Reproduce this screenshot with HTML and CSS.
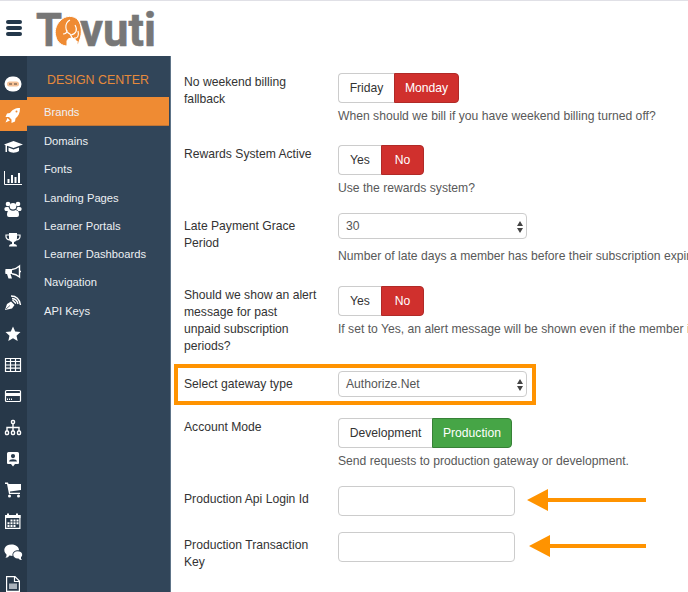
FILE: index.html
```html
<!DOCTYPE html>
<html lang="en">
<head>
<meta charset="utf-8">
<title>Tovuti</title>
<link rel="stylesheet" href="styles.css">
</head>
<body>
<div class="app">
<header class="header">
  <div class="burger"><i></i><i></i><i></i></div>
  <svg class="logo" width="122" height="44" viewBox="0 0 122 44">
    <g class="logo-text">
      <text x="0" y="37.500" textLength="26" lengthAdjust="spacingAndGlyphs">T</text>
      <text x="44" y="37.500" textLength="76" lengthAdjust="spacingAndGlyphs">vuti</text>
    </g>
    <path stroke="#fff" stroke-width="1" fill="#ef8b33" d="M24 13C29 7 38 7 42 12C46 17 46 26 44 31Q43 35 41 37V34C39 29 32 29 31 33V38C26 38 21 34 20 29C18 23 20 17 24 13Z"/>
    <path fill="none" stroke="#fff" stroke-width="1.100" d="M34 12C28 15 29 24 34 26C36 30 38 34 42 34M35 27C40 26 42 22 39 17M38 30C42 31 43 27 42 23M31 22C31 25 30 26 27 26"/>
  </svg>
</header>
<div class="body">
  <nav class="rail">
    <a><svg viewBox="0 0 18 18"><rect x=".5" y="1.5" width="17" height="15" rx="7.5" fill="#fff"/><rect x="3" y="6.5" width="12" height="5" rx="2.5" fill="#f5c196"/><path d="M5 9h3M10 9h3" stroke="#53453b"/></svg></a>
    <a class="on"><svg viewBox="0 0 18 18"><path fill="#fff" d="M16 2C11 2 8 4 6 7L3 7.500L1.500 11H5L7.500 13.500V17L11 15.500L11.500 12.500C14.500 10 16 7 16 2ZM3.500 12L1.500 16.500L6 14.500Z"/><circle cx="12.500" cy="5.500" r="1" fill="#ef8b33"/></svg></a>
    <a><svg viewBox="0 0 18 18"><path fill="#fff" d="M9.500 3L19 6.500L9.500 10L3 7.700V14H1.500V7.300L0 6.500ZM4.500 9.500L9.500 11.500L15 9.500V13C12 15.200 7 15.200 4.500 13Z"/></svg></a>
    <a><svg viewBox="0 0 18 18"><path fill="none" stroke="#fff" d="M.5 2V15.500H18"/><path stroke="#fff" stroke-width="2" d="M4.500 14V10M8 14V6M11.500 14V8M15 14V4"/></svg></a>
    <a><svg viewBox="0 0 18 18" fill="#fff"><circle cx="4" cy="4" r="2.300"/><circle cx="14" cy="4" r="2.300"/><circle cx="9" cy="6.300" r="3.300"/><path d="M.5 10V8Q1 6.500 4.500 7L6 10L4.500 11H1.500ZM17.500 10V8Q17 6.500 13.500 7L12 10L13.500 11H16.500ZM5.500 9.500Q9 12 12.500 9.500Q15 10.500 15 15Q15 17 13 17H5Q3 17 3 15Q3 10.500 5.500 9.500Z"/></svg></a>
    <a><svg viewBox="0 0 18 18"><path fill="#fff" d="M5 2H13V7Q13 10 10 11V13Q13 13 13 15.500H5Q5 13 8 13V11Q5 10 5 7Z"/><path fill="none" stroke="#fff" stroke-width="1.200" d="M5 4H2V5.500Q2 8.500 6 9M13 4H16V5.500Q16 8.500 12 9"/></svg></a>
    <a><svg viewBox="0 0 18 18"><path fill="#fff" d="M1.500 6H8V11H6.500L8 15.500H4.500L3 11H1.500Q1 8.500 1.500 6Z"/><path fill="none" stroke="#fff" stroke-width="1.400" d="M8 6.500Q12 6 15.500 3V14Q12 11 8 10.700M15 8.500H17"/></svg></a>
    <a><svg viewBox="0 0 18 18"><path fill="#fff" d="M1 16L3 10L7 7.500L10.500 11L8 14.500ZM8 6.500L11.500 10L12.500 9L9 5.500Z"/><path stroke="#293b4d" stroke-width=".7" d="M2 15L6 11.500"/><path fill="none" stroke="#fff" stroke-width="1.400" d="M7 2Q15 2 16.500 11M8 4.500Q13 5 14 10"/></svg></a>
    <a><svg viewBox="0 0 18 18"><path fill="#fff" d="M9 1.500L11.200 6.500L16.500 7L12.500 10.700L13.700 16L9 13.200L4.300 16L5.500 10.700L1.500 7L6.800 6.500Z"/></svg></a>
    <a><svg viewBox="0 0 18 18"><path fill="none" stroke="#fff" stroke-width="1.200" d="M1.500 2.500H16.500V15.500H1.500ZM1.500 5.500H16.500M1.500 9H16.500M1.500 12.200H16.500M6.500 2.500V15.500M11.500 2.500V15.500"/></svg></a>
    <a><svg viewBox="0 0 18 18"><rect x="1.500" y="3.500" width="15" height="11" rx="1" fill="none" stroke="#fff" stroke-width="1.200"/><path fill="#fff" d="M1.500 6H16.500V9H1.500ZM3 11.500h1v1.500h-1zM5 11.500h1v1.500h-1zM7 11.500h1v1.500h-1z"/></svg></a>
    <a><svg viewBox="0 0 18 18"><g fill="none" stroke="#fff" stroke-width="1.400"><rect x="7.500" y="1.500" width="3" height="3" rx="1"/><rect x="1.500" y="12" width="3" height="3.500" rx="1"/><rect x="7.500" y="12" width="3" height="3.500" rx="1"/><rect x="13.500" y="12" width="3" height="3.500" rx="1"/><path d="M9 4.500V12M3 12V8.500H15V12"/></g></svg></a>
    <a><svg viewBox="0 0 18 18"><path fill="#fff" d="M4.500 2H13.500Q15 2 15 3.500V13Q15 14 14 14H11L9 16.500L7 14H4Q3 14 3 13V3.500Q3 2 4.500 2Z"/><path fill="#293b4d" d="M9 4a2 2 0 0 1 0 4.200a2 2 0 0 1 0-4.200ZM5 11.500Q5.500 9.200 9 9.200T13 11.500Z"/></svg></a>
    <a><svg viewBox="0 0 18 18"><path fill="#fff" d="M1 1.500H4L4.500 3H17V9L6 10.500V11.700H16V13H5L3 3H1Z"/><circle cx="5.500" cy="15" r="1.500" fill="#fff"/><circle cx="14.500" cy="15" r="1.500" fill="#fff"/></svg></a>
    <a><svg viewBox="0 0 18 18"><path fill="none" stroke="#fff" stroke-width="1.200" d="M1.600 3.500H15.900V16.400H1.600Z"/><path fill="#fff" d="M1 3H3V1.500H5V3H12V1.500H14V3H16.500V6H1ZM6.500 7.500h2v2h-2zM9.500 7.500h2v2h-2zM12.500 7.500h2v2h-2zM3.500 10.300h2v2h-2zM6.500 10.300h2v2h-2zM9.500 10.300h2v2h-2zM12.500 10.300h2v2h-2zM3.500 13h2v2h-2zM6.500 13h2v2h-2zM9.500 13h2v2h-2z"/></svg></a>
    <a><svg viewBox="0 0 18 18"><path fill="#fff" d="M7.500 1.500C12 1.500 15 4 15 7.200C11 7 8 9 8.500 13L5.500 12.500Q4 15 1.500 14.800Q3 13 2.500 11.500C-1.500 8 0 1.500 7.500 1.500Z"/><path fill="#fff" d="M13.500 8.300C19 8.300 19 13 17 14Q16.500 16 18 17Q15.500 17 14.500 15.500C8 16 7.500 8.300 13.500 8.300Z"/></svg></a>
    <a><svg viewBox="0 0 18 18"><path fill="none" stroke="#fff" stroke-width="1.200" d="M2.600 1.600H11L15.400 6V16.400H2.600ZM10.500 1.600V6.500H15.400"/><path fill="#aab3bc" d="M5 8.500H13V14H5Z"/></svg></a>
  </nav>
  <nav class="menu">
    <h2>DESIGN CENTER</h2>
    <a class="on">Brands</a>
    <a>Domains</a>
    <a>Fonts</a>
    <a>Landing Pages</a>
    <a>Learner Portals</a>
    <a>Learner Dashboards</a>
    <a>Navigation</a>
    <a>API Keys</a>
  </nav>
  <main class="form">
    <div class="row">
      <label>No weekend billing<br>fallback</label>
      <div><div class="group"><b class="w56">Friday</b><b class="red w65">Monday</b></div><p>When should we bill if you have weekend billing turned off?</p></div>
    </div>
    <div class="row">
      <label>Rewards System Active</label>
      <div><div class="group"><b class="w43">Yes</b><b class="red w43">No</b></div><p>Use the rewards system?</p></div>
    </div>
    <div class="row low">
      <label>Late Payment Grace<br>Period</label>
      <div><div class="select">30<svg width="6" height="12" viewBox="0 0 6 12"><path fill="#444" d="M0 5L3 0L6 5ZM0 7L3 12L6 7Z"/></svg></div><p class="far">Number of late days a member has before their subscription expires.</p></div>
    </div>
    <div class="row">
      <label>Should we show an alert<br>message for past<br>unpaid subscription<br>periods?</label>
      <div><div class="group"><b class="w43">Yes</b><b class="red w43">No</b></div><p>If set to Yes, an alert message will be shown even if the member is</p></div>
    </div>
    <div class="row low marked">
      <label>Select gateway type</label>
      <div><div class="select">Authorize.Net<svg width="6" height="12" viewBox="0 0 6 12"><path fill="#444" d="M0 5L3 0L6 5ZM0 7L3 12L6 7Z"/></svg></div></div>
    </div>
    <div class="row">
      <label>Account Mode</label>
      <div><div class="group"><b class="w94">Development</b><b class="green w80">Production</b></div><p>Send requests to production gateway or development.</p></div>
    </div>
    <div class="row low">
      <label>Production Api Login Id</label>
      <div class="field"><div class="input"></div><svg class="arrow" width="119" height="22" viewBox="0 0 119 22"><path fill="#ff9300" d="M0 11L21 0V9H119V13H21V22Z"/></svg></div>
    </div>
    <div class="row low">
      <label>Production Transaction<br>Key</label>
      <div class="field"><div class="input"></div><svg class="arrow second" width="117" height="22" viewBox="0 0 117 22"><path fill="#ff9300" d="M0 11L21 0V9H117V13H21V22Z"/></svg></div>
    </div>
  </main>
</div>
</div>
</body>
</html>
```
FILE: styles.css
```css
* { box-sizing: border-box; }
body { margin: 0; background: #fff; font-family: "Liberation Sans", Arial, sans-serif; }
.app { width: 688px; height: 592px; overflow: hidden; display: flex; flex-direction: column; }
.header { height: 56px; flex: none; border-top: 1px solid #e0e0e6; display: flex; align-items: flex-start; padding: 7px 0 0 6px; }
.burger { width: 16px; margin-top: 12px; display: flex; flex-direction: column; gap: 2px; }
.burger i { height: 4px; border-radius: 2px; background: #24384b; }
.logo { margin-left: 14px; overflow: visible; }
.logo-text { font: 700 46px Roboto, sans-serif; fill: #777; stroke: #777; stroke-width: .6px; }
.body { flex: 1; display: flex; min-height: 0; }
.rail { width: 27px; flex: none; background: #273849; padding-top: 12.6px; }
.rail a { height: 31.23px; display: flex; align-items: center; justify-content: center; }
.rail svg { width: 18px; height: 18px; flex: none; overflow: visible; margin-right: 1px; }
.rail .on { background: #ef8b33; }
.menu { width: 144px; flex: none; background: #314559; border-right: 1px solid #5e7488; }
.menu h2 { margin: 0; height: 41px; padding: 3px 0 0 20px; font-size: 12.4px; line-height: 42px; font-weight: 400; color: #e68a3c; white-space: nowrap; }
.menu a { display: block; height: 28.3px; line-height: 30.5px; padding-left: 17px; margin-right: 1px; font-size: 11.2px; color: #edf0f3; }
.menu .on { background: #ef8b33; height: 29px; line-height: 31px; border-bottom: 1px solid #c27636; }
.form { flex: 1; min-width: 0; padding: 17px 0 0 13px; overflow: hidden; display: grid; align-content: start; grid-template-rows: 72px 68px 73px 85px 47px 68px 46px 46px; font-size: 12.15px; line-height: 17px; color: #333; white-space: nowrap; }
.row { display: grid; grid-template-columns: 154px 1fr; align-items: start; position: relative; }
.row label { padding-top: 1px; }
.low label { padding-top: 5px; }
.group { display: flex; height: 30px; }
.group b { font-weight: 400; border: 1px solid #ccc; display: flex; align-items: center; justify-content: center; padding-top: 1px; }
.group b:first-child { border-radius: 4px 0 0 4px; border-right: 0; }
.group b:last-child { border-radius: 0 4px 4px 0; }
.group .red { background: #d0302d; border-color: #b02a27; color: #fff; }
.group .green { background: #46a546; border-color: #378137; color: #fff; }
.w43 { width: 43px; }
.w56 { width: 56px; }
.w65 { width: 65px; }
.w80 { width: 80px; }
.w94 { width: 94px; }
.row p { margin: 5px 0 0; color: #595959; }
.row .far { margin-top: 9px; }
.select { width: 189px; height: 26px; border: 1px solid #ccc; border-radius: 4px; padding: 1px 3px 0 7px; display: flex; align-items: center; justify-content: space-between; color: #555; }
.input { width: 177px; height: 30px; border: 1px solid #ccc; border-radius: 4px; }
.field { display: flex; align-items: flex-start; }
.arrow { margin: 3px 0 0 12px; }
.arrow.second { margin-left: 14px; }
.marked::after { content: ""; box-sizing: border-box; position: absolute; left: -10px; top: -7px; width: 362px; height: 41px; border: 4px solid #ff9300; }
```
